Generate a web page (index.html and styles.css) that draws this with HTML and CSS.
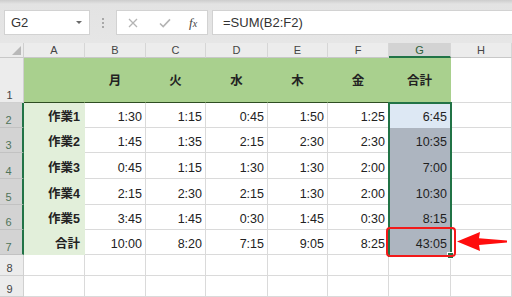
FILE: index.html
```html
<!DOCTYPE html>
<html>
<head>
<meta charset="utf-8">
<link rel="stylesheet" href="styles.css">
</head>
<body>
<div class="app">
  <div class="toolbar">
    <div class="namebox"><span class="nb-text">G2</span><span class="nb-arrow"></span></div>
    <div class="dots"><i></i><i></i><i></i></div>
    <div class="fbtns">
      <svg class="ic-x" width="10" height="10" viewBox="0 0 10 10"><path d="M1 1L9 9M9 1L1 9" stroke="#b4b4b4" stroke-width="1.3" fill="none"/></svg>
      <svg class="ic-ok" width="12" height="10" viewBox="0 0 12 10"><path d="M1 5.5L4.2 8.6L11 1.4" stroke="#b4b4b4" stroke-width="1.6" fill="none"/></svg>
      <span class="ic-fx">f<span class="fx-x">x</span></span>
    </div>
    <div class="formula">=SUM(B2:F2)</div>
  </div>
  <div class="sheet">
    <div class="corner"><span class="tri"></span></div>
    <div class="ch">A</div><div class="ch">B</div><div class="ch">C</div><div class="ch">D</div><div class="ch">E</div><div class="ch">F</div><div class="ch ch-sel">G</div><div class="ch">H</div>

    <div class="rh">1</div>
    <div class="c hd"></div><div class="c hd">月</div><div class="c hd">火</div><div class="c hd">水</div><div class="c hd">木</div><div class="c hd">金</div><div class="c hd">合計</div><div class="c"></div>

    <div class="rh rh-sel">2</div>
    <div class="c lab">作業1</div><div class="c">1:30</div><div class="c">1:15</div><div class="c">0:45</div><div class="c">1:50</div><div class="c">1:25</div><div class="c g-act">6:45</div><div class="c"></div>

    <div class="rh rh-sel">3</div>
    <div class="c lab">作業2</div><div class="c">1:45</div><div class="c">1:35</div><div class="c">2:15</div><div class="c">2:30</div><div class="c">2:30</div><div class="c g-sel">10:35</div><div class="c"></div>

    <div class="rh rh-sel">4</div>
    <div class="c lab">作業3</div><div class="c">0:45</div><div class="c">1:15</div><div class="c">1:30</div><div class="c">1:30</div><div class="c">2:00</div><div class="c g-sel">7:00</div><div class="c"></div>

    <div class="rh rh-sel">5</div>
    <div class="c lab">作業4</div><div class="c">2:15</div><div class="c">2:30</div><div class="c">2:15</div><div class="c">1:30</div><div class="c">2:00</div><div class="c g-sel">10:30</div><div class="c"></div>

    <div class="rh rh-sel">6</div>
    <div class="c lab">作業5</div><div class="c">3:45</div><div class="c">1:45</div><div class="c">0:30</div><div class="c">1:45</div><div class="c">0:30</div><div class="c g-sel">8:15</div><div class="c"></div>

    <div class="rh rh-sel">7</div>
    <div class="c lab">合計</div><div class="c">10:00</div><div class="c">8:20</div><div class="c">7:15</div><div class="c">9:05</div><div class="c">8:25</div><div class="c g-sel">43:05</div><div class="c"></div>

    <div class="rh">8</div>
    <div class="c"></div><div class="c"></div><div class="c"></div><div class="c"></div><div class="c"></div><div class="c"></div><div class="c"></div><div class="c"></div>

    <div class="rh">9</div>
    <div class="c"></div><div class="c"></div><div class="c"></div><div class="c"></div><div class="c"></div><div class="c"></div><div class="c"></div><div class="c"></div>

    <div class="selbox"></div>
    <div class="handle"></div>
    <div class="redbox"></div>
    <svg class="arrow" width="52" height="24" viewBox="0 0 52 24">
      <path d="M1 11.5L24 2L23 8.2L51 10.6L51 12.6L23 15L24 21Z" fill="#ff0d0d"/>
    </svg>
  </div>
</div>
</body>
</html>
```
FILE: styles.css
```css
* { box-sizing: border-box; }
html, body { margin: 0; padding: 0; background: #fff; }
body { width: 512px; height: 297px; overflow: hidden; font-family: "Liberation Sans", "Noto Sans CJK JP", sans-serif; color: #222; }

.app { width: 512px; }

.toolbar {
  height: 43px;
  display: flex;
  align-items: flex-start;
  padding-top: 10px;
  background: linear-gradient(#cdcdcd 0, #e3e3e3 4px, #e6e6e6 100%);
}
.namebox {
  margin-left: 4px;
  width: 86px;
  height: 25px;
  background: #fff;
  border: 1px solid #d2d2d2;
  display: flex;
  align-items: center;
  justify-content: space-between;
  padding: 0 6px 0 6px;
}
.nb-text { font-size: 13px; color: #333; }
.nb-arrow { width: 0; height: 0; border-left: 3px solid transparent; border-right: 3px solid transparent; border-top: 3px solid #6a6a6a; margin-right: 1px; }
.dots { width: 26px; height: 25px; display: flex; flex-direction: column; align-items: center; justify-content: center; gap: 2px; }
.dots i { display: block; width: 2px; height: 2px; background: #a8a8a8; }
.fbtns {
  width: 92px;
  height: 25px;
  background: #fff;
  border: 1px solid #d2d2d2;
  display: flex;
  align-items: center;
  padding-left: 11px;
}
.ic-x { margin-right: 21px; }
.ic-ok { margin-right: 18px; }
.ic-fx { font-family: "Liberation Serif", serif; font-style: italic; font-size: 13px; color: #444; line-height: 1; }
.fx-x { font-size: 10px; }
.formula {
  margin-left: 4px;
  flex: 1;
  height: 25px;
  background: #fff;
  border: 1px solid #d2d2d2;
  border-right: none;
  font-size: 13px;
  color: #333;
  padding-left: 10px;
  line-height: 23px;
}

.sheet {
  position: relative;
  display: grid;
  grid-template-columns: 24px 61px 61px 60px 62px 60px 61px 62px 61px;
  grid-template-rows: 15px 45px 25px 25px 26px 26px 25px 25px 21px 21px;
}
.corner { background: #ececec; border-right: 1px solid #d0d0d0; border-bottom: 1px solid #c8c8c8; position: relative; }
.tri { position: absolute; right: 2px; bottom: 2px; width: 0; height: 0; border-left: 9px solid transparent; border-bottom: 9px solid #b8b8b8; }
.ch {
  background: #ececec;
  border-right: 1px solid #d6d6d6;
  border-bottom: 1px solid #c8c8c8;
  font-size: 11px;
  color: #444;
  text-align: center;
  line-height: 14px;
}
.ch-sel { background: #d3d3d3; border-bottom: 2px solid #217346; color: #2f5f3a; line-height: 15px; }
.rh {
  background: #ececec;
  border-right: 1px solid #d0d0d0;
  border-bottom: 1px solid #d0d0d0;
  font-size: 11px;
  color: #444;
  display: flex;
  align-items: flex-end;
  justify-content: center;
  padding-bottom: 1px;
  padding-right: 4px;
  line-height: 12px;
}
.rh-sel { background: #d3d3d3; border-right: 2px solid #217346; border-bottom-color: #c2c2c2; color: #4f7459; padding-right: 5px; }

.c {
  border-right: 1px solid #dadada;
  border-bottom: 1px solid #dadada;
  font-size: 12.5px;
  line-height: 15px;
  display: flex;
  align-items: flex-end;
  justify-content: flex-end;
  padding: 0 3px 2px 0;
  white-space: nowrap;
}
.hd {
  background: #a9d08e;
  border-right-color: #a9d08e;
  border-bottom: 1px solid #2e4d22;
  font-weight: bold;
  justify-content: center;
  align-items: center;
  padding: 2px 0 0 0;
}
.lab { background: #e2efda; border-color: #e2efda; font-weight: bold; padding-right: 4px; }
.g-act { background: #dde8f4; border-color: #dde8f4; }
.g-sel { background: #adb5c0; border-color: #adb5c0; color: #1f1f1f; }

.selbox {
  position: absolute;
  left: 388px; top: 59px;
  width: 64px; height: 155px;
  border: 2px solid #217346;
  pointer-events: none;
}
.handle {
  position: absolute;
  left: 447px; top: 209px;
  width: 7px; height: 7px;
  background: #217346;
  border: 1px solid #fff;
}
.redbox {
  position: absolute;
  left: 386px; top: 184px;
  width: 70px; height: 30px;
  border: 2px solid #f21a1a;
  border-radius: 4px;
}
.arrow { position: absolute; left: 456px; top: 187px; }
```
